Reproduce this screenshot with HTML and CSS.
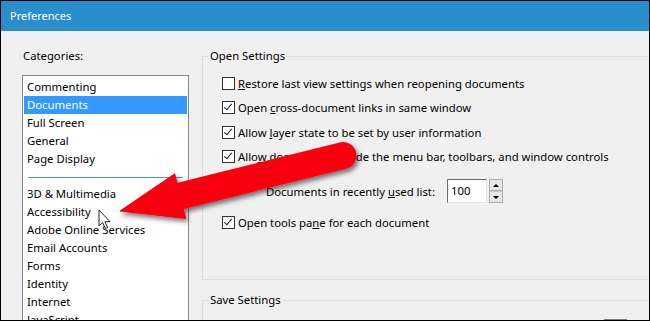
FILE: index.html
```html
<!DOCTYPE html>
<html>
<head>
<meta charset="utf-8">
<title>Preferences</title>
<link rel="stylesheet" href="styles.css">
</head>
<body>
<div class="window">
  <div class="titlebar">Preferences</div>
  <div class="main">
    <div class="categories">
      <div class="cat-label">Categories:</div>
      <ul class="listbox">
        <li>Commenting</li>
        <li class="selected">Documents</li>
        <li>Full Screen</li>
        <li>General</li>
        <li>Page Display</li>
        <li class="sep"></li>
        <li>3D &amp; Multimedia</li>
        <li>Accessibility</li>
        <li>Adobe Online Services</li>
        <li>Email Accounts</li>
        <li>Forms</li>
        <li>Identity</li>
        <li>Internet</li>
        <li>JavaScript</li>
      </ul>
    </div>
    <div class="panel">
      <fieldset class="group open">
        <legend>Open Settings</legend>
        <div class="opts">
          <div class="check"><span class="box"></span><span><u>R</u>estore last view settings when reopening documents</span></div>
          <div class="check"><span class="box checked"></span><span>Open <u>c</u>ross-document links in same window</span></div>
          <div class="check"><span class="box checked"></span><span>Allow <u>l</u>ayer state to be set by user information</span></div>
          <div class="check"><span class="box checked"></span><span>Allo<u>w</u> documents to hide the menu bar, toolbars, and window controls</span></div>
          <div class="spin-row">
            <span class="spin-label">Documents in recently <u>u</u>sed list:</span>
            <span class="spin-input">100</span>
            <span class="spin-buttons">
              <span class="spin-btn up"></span>
              <span class="spin-btn down"></span>
            </span>
          </div>
          <div class="check"><span class="box checked"></span><span>Open tools pa<u>n</u>e for each document</span></div>
        </div>
      </fieldset>
      <fieldset class="group save">
        <legend>Save Settings</legend>
        <div class="save-row"><span class="stub"></span></div>
      </fieldset>
    </div>
  </div>
  <svg class="overlay" width="650" height="321" viewBox="0 0 650 321">
    <defs>
      <filter id="shadow" x="-20%" y="-30%" width="150%" height="170%">
        <feGaussianBlur in="SourceAlpha" stdDeviation="2.5"/>
        <feOffset dx="2" dy="3" result="b"/>
        <feComponentTransfer><feFuncA type="linear" slope="0.55"/></feComponentTransfer>
        <feMerge><feMergeNode/><feMergeNode in="SourceGraphic"/></feMerge>
      </filter>
    </defs>
    <g filter="url(#shadow)" fill="#f8000b" stroke="#f8000b">
      <line x1="178" y1="196.6" x2="343" y2="155.6" stroke-width="27" stroke-linecap="round"/>
      <polygon points="120,211 174.7,173.8 185.7,218.4" stroke-width="1" stroke-linejoin="round"/>
    </g>
    <path d="M99 210 L99 226 L102.6 222.6 L105.4 228.6 L107.6 227.6 L104.9 221.7 L110 221.7 Z" fill="#fff" stroke="#222" stroke-width="1" stroke-linejoin="round"/>
  </svg>
</div>
</body>
</html>
```

FILE: styles.css
```css
* { box-sizing: border-box; }
html, body { margin: 0; padding: 0; }
body {
  font-family: "Noto Sans", "Open Sans", sans-serif;
  font-size: 11.3px;
  color: #000;
  background: #f0f0f0;
}
.window {
  position: relative;
  width: 650px;
  height: 321px;
  border: 1px solid #000;
  background: #f0f0f0;
  overflow: hidden;
}
.titlebar {
  height: 30px;
  line-height: 30px;
  background: #2a8dcc;
  color: #fff;
  padding-left: 9px;
  font-size: 11px;
}
.main {
  display: flex;
  padding-top: 17px;
}
.categories {
  padding-left: 21px;
  flex: none;
}
.cat-label {
  line-height: 16px;
  height: 16px;
  padding-left: 1px;
}
.listbox {
  list-style: none;
  margin: 11px 0 0 0;
  padding: 2px 1px;
  width: 167px;
  height: 270px;
  background: #fff;
  border: 1px solid #828790;
}
.listbox li {
  height: 18px;
  line-height: 17px;
  padding-left: 3px;
  white-space: nowrap;
}
.listbox li.selected {
  background: #3399ff;
  color: #fff;
}
.listbox li.sep {
  height: 17px;
  position: relative;
  padding: 0 4px;
  display: flex;
  align-items: center;
}
.listbox li.sep::before {
  content: "";
  display: block;
  height: 1px;
  width: 100%;
  background: #3f97e8;
  margin-top: 1px;
}
.panel {
  margin-left: 13px;
  flex: none;
  width: 470px;
}
.group {
  margin: 0;
  padding: 0;
  border: 1px solid #dcdcdc;
  min-width: 0;
}
.group legend {
  margin-left: 5px;
  padding: 0 2px;
  line-height: 16px;
  height: 16px;
}
.open .opts {
  padding: 11px 0 49px 19px;
}
.check {
  display: flex;
  align-items: center;
  height: 16px;
  gap: 3px;
  white-space: nowrap;
}
.check + .check { margin-top: 8.5px; }
.box {
  width: 13px;
  height: 13px;
  border: 1px solid #333;
  background: #fff;
  position: relative;
  flex: none;
}
.box.checked::after {
  content: "";
  position: absolute;
  left: 3px;
  top: 0px;
  width: 3px;
  height: 7px;
  border-right: 1.3px solid #222;
  border-bottom: 1.3px solid #222;
  transform: rotate(40deg);
}
.spin-row {
  display: flex;
  align-items: center;
  height: 24px;
  margin: 14.5px 0 11px 44px;
}
.spin-label { white-space: nowrap; }
.spin-input {
  margin-left: 12px;
  width: 40px;
  height: 24px;
  background: #fff;
  border-style: solid;
  border-width: 1px;
  border-color: #6d6d6d #e3e3e3 #e3e3e3 #6d6d6d;
  padding-left: 3px;
  line-height: 21px;
}
.spin-buttons {
  margin-left: 2px;
  display: flex;
  flex-direction: column;
  gap: 0;
}
.spin-btn {
  width: 14px;
  height: 12px;
  background: #e5e5e5;
  border: 1px solid #adadad;
  display: flex;
  align-items: center;
  justify-content: center;
}
.spin-btn.down { border-top-color: #c8c8c8; }
.spin-btn::after {
  content: "";
  width: 0;
  height: 0;
  border-left: 3px solid transparent;
  border-right: 3px solid transparent;
}
.spin-btn.up::after { border-bottom: 3px solid #000; }
.spin-btn.down::after { border-top: 3px solid #000; }
.save {
  margin-top: 12px;
  height: 60px;
}
.save-row {
  padding: 11px 0 0 401px;
}
.stub {
  display: block;
  width: 23px;
  height: 6px;
  background: #7a7a7a;
}
.overlay {
  position: absolute;
  left: -1px;
  top: -1px;
  pointer-events: none;
}
```
